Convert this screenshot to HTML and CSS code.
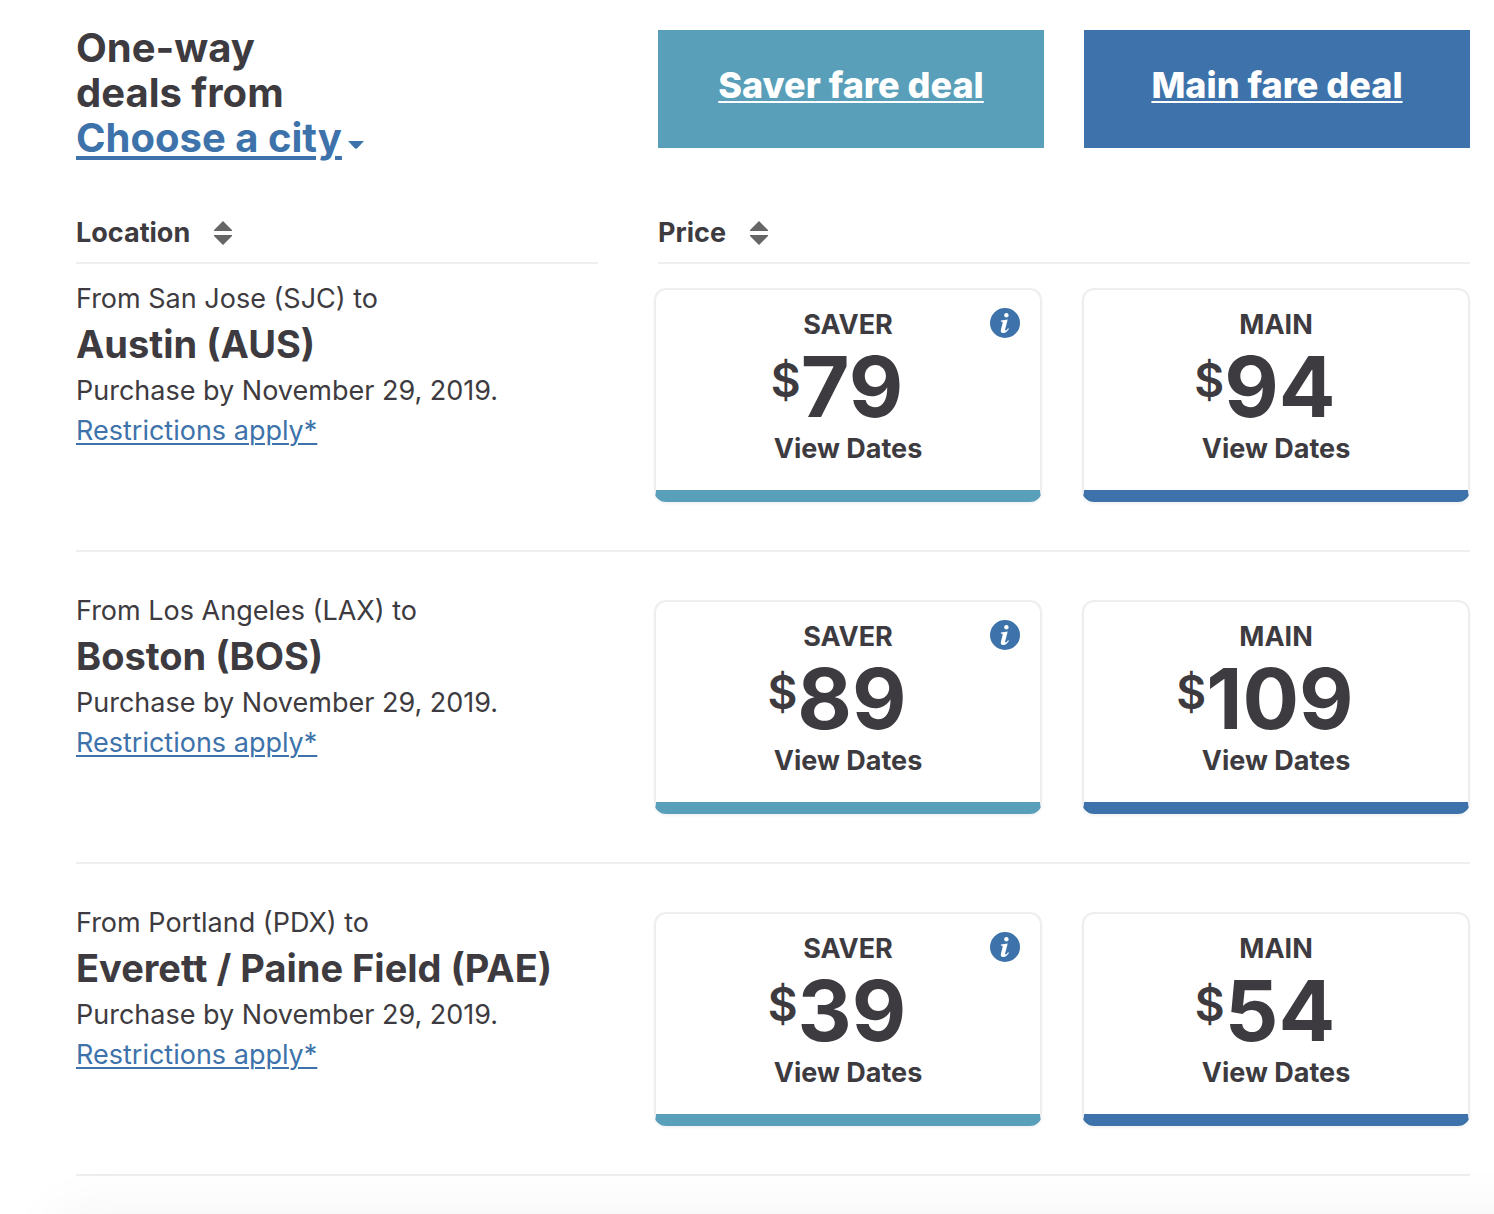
FILE: index.html
```html
<!DOCTYPE html>
<html lang="en">
<head>
    <meta charset="UTF-8">
    <meta name="viewport" content="width=device-width, initial-scale=1.0">
    <title>One-way deals</title>
    <link rel="stylesheet" href="styles.css">
</head>
<body>
    <svg class="sprite" aria-hidden="true">
      <symbol id="sort" viewBox="0 0 18 24">
        <path d="M9 0L18 9V10H0V9Z M0 14H18V15L9 24L0 15Z" />
      </symbol>
      <symbol id="info" viewBox="0 0 30 30">
        <circle cx="15" cy="15" r="15" fill="#3d73aa" />
        <circle cx="16.4" cy="7.3" r="2.2" fill="#fff" />
        <path d="M11 12.4L17.7 11.6L15.2 21.2Q14.8 22.7 15.600 22.6Q16.7 22.3 18.1 20.2L19 20.8Q16.5 25 13.2 25.100Q10.2 25 10.9 21.8L12.7 14.8Q13 13.6 10.800 13.5Z" fill="#fff" />
      </symbol>
    </svg>

    <main class="deals">
      <header class="top">
        <h1 class="title">
          One-way<br />deals from<br />
          <button type="button" class="city-picker"><span>Choose a city</span><svg viewBox="0 0 16 8"><path d="M0 0H16L9.5 7Q8 8.500 6.500 7Z" /></svg></button>
        </h1>
        <div class="fares">
          <a href="#saver" class="fare saver">Saver fare deal</a>
          <a href="#main" class="fare main">Main fare deal</a>
        </div>
      </header>

      <table class="list">
        <thead>
          <tr>
            <th class="col-location"><div class="head"><button type="button">Location <svg><use href="#sort" /></svg></button></div></th>
            <th><div class="head"><button type="button">Price <svg><use href="#sort" /></svg></button></div></th>
          </tr>
        </thead>
        <tbody>
          <tr>
            <td>
              <p class="from">From San Jose (SJC) to</p>
              <h2>Austin (AUS)</h2>
              <p>Purchase by November 29, 2019.</p>
              <p><a href="#restrictions">Restrictions apply*</a></p>
            </td>
            <td>
              <div class="cards">
                <div class="card saver">
                  <button type="button" class="info" aria-label="About Saver fares"><svg><use href="#info" /></svg></button>
                  <a href="#dates"><span>SAVER</span><strong><sup>$</sup>79</strong><span>View Dates</span></a>
                </div>
                <div class="card main">
                  <a href="#dates"><span>MAIN</span><strong><sup>$</sup>94</strong><span>View Dates</span></a>
                </div>
              </div>
            </td>
          </tr>
          <tr>
            <td>
              <p class="from">From Los Angeles (LAX) to</p>
              <h2>Boston (BOS)</h2>
              <p>Purchase by November 29, 2019.</p>
              <p><a href="#restrictions">Restrictions apply*</a></p>
            </td>
            <td>
              <div class="cards">
                <div class="card saver">
                  <button type="button" class="info" aria-label="About Saver fares"><svg><use href="#info" /></svg></button>
                  <a href="#dates"><span>SAVER</span><strong><sup>$</sup>89</strong><span>View Dates</span></a>
                </div>
                <div class="card main">
                  <a href="#dates"><span>MAIN</span><strong><sup>$</sup>109</strong><span>View Dates</span></a>
                </div>
              </div>
            </td>
          </tr>
          <tr>
            <td>
              <p class="from">From Portland (PDX) to</p>
              <h2>Everett / Paine Field (PAE)</h2>
              <p>Purchase by November 29, 2019.</p>
              <p><a href="#restrictions">Restrictions apply*</a></p>
            </td>
            <td>
              <div class="cards">
                <div class="card saver">
                  <button type="button" class="info" aria-label="About Saver fares"><svg><use href="#info" /></svg></button>
                  <a href="#dates"><span>SAVER</span><strong><sup>$</sup>39</strong><span>View Dates</span></a>
                </div>
                <div class="card main">
                  <a href="#dates"><span>MAIN</span><strong><sup>$</sup>54</strong><span>View Dates</span></a>
                </div>
              </div>
            </td>
          </tr>
        </tbody>
      </table>
    </main>
    <div class="bottom-bar"></div>
</body>
</html>
```
FILE: styles.css
```css
* {
  box-sizing: border-box;
}

body {
  margin: 0;
  font-family: Inter, "Open Sans", sans-serif;
  font-size: 27px;
  color: #3d3b40;
  background-color: #fff;
}

h1, h2, p {
  margin: 0;
}

button {
  font: inherit;
  color: inherit;
  background: none;
  border: none;
  padding: 0;
  cursor: pointer;
}

.sprite {
  position: absolute;
  width: 0;
  height: 0;
}

.deals {
  padding: 30px 24px 0 76px;
}

/* Title and the two fare links */
.top {
  display: grid;
  grid-template-columns: 9fr 14fr;
  gap: 60px;
}

.title {
  font-size: 40px;
  line-height: 45px;
  margin-top: -5px;
}

.city-picker {
  display: flex;
  align-items: center;
  gap: 6px;
  color: #3d73aa;
}

.city-picker span {
  text-decoration: underline;
  text-decoration-thickness: 4px;
  text-underline-offset: 4px;
}

.city-picker svg {
  width: 16px;
  height: 8px;
  margin-top: 14px;
  fill: #3d73aa;
}

.fares {
  display: flex;
  gap: 40px;
}

.fare {
  flex: 1;
  height: 118px;
  padding-top: 30px;
  line-height: 50px;
  font-size: 36px;
  font-weight: 800;
  text-align: center;
  color: #fff;
  text-decoration-thickness: 2px;
  text-underline-offset: 3px;
}

.fare.saver {
  background-color: #599fb9;
}

.fare.main {
  background-color: #3d73aa;
}

/* Deals list */
.list {
  width: 100%;
  margin-top: 53px;
  table-layout: fixed;
  border-collapse: collapse;
}

.list th, .list td {
  padding: 0;
  text-align: left;
  vertical-align: top;
}

.col-location {
  width: 41.75%;
}

.list .col-location {
  padding-right: 60px;
}

.head {
  height: 51px;
  border-bottom: 2px solid #eee;
}

.head button {
  display: flex;
  align-items: center;
  gap: 24px;
  line-height: 40px;
  font-weight: 700;
}

.head svg {
  width: 18px;
  height: 24px;
  fill: #666;
}

.list td {
  padding: 48px 0;
  line-height: 40px;
}

.list tbody tr {
  border-bottom: 2px solid #eee;
}

.list tbody tr:first-child td {
  padding-top: 24px;
}

.list .from {
  line-height: 22px;
}

.list h2 {
  margin: 9px 0 2px;
  font-size: 38px;
  line-height: 50px;
}

.list p a {
  color: #3d73aa;
  text-decoration-thickness: 2px;
  text-underline-offset: 3px;
}

/* Price cards */
.cards {
  display: flex;
  gap: 40px;
  margin-left: -4px;
}

.card {
  position: relative;
  flex: 1;
  border: 2px solid #eee;
  border-bottom: 12px solid;
  border-radius: 12px;
  box-shadow: 0 2px 3px rgba(0, 0, 0, 0.05);
}

.card.saver {
  border-bottom-color: #599fb9;
}

.card.main {
  border-bottom-color: #3d73aa;
}

.card a {
  display: block;
  padding: 19px 0 25px;
  color: inherit;
  text-align: center;
  text-decoration: none;
  font-weight: 700;
  line-height: 32px;
}

.card span {
  display: block;
}

.card strong {
  display: flex;
  justify-content: center;
  padding-right: 22px;
  font-size: 84px;
  font-weight: 700;
  line-height: 92px;
}

.card sup {
  font-size: 46px;
  font-weight: 600;
  line-height: 78px;
}

.info {
  position: absolute;
  top: 18px;
  right: 20px;
  height: 30px;
}

.info svg {
  display: block;
  width: 30px;
  height: 30px;
}

/* Bar below the fold, only its shadow shows */
.bottom-bar {
  position: fixed;
  top: 100%;
  left: 56px;
  right: -60px;
  height: 80px;
  box-shadow: 0 0 60px rgba(0, 0, 0, 0.05);
}
```
